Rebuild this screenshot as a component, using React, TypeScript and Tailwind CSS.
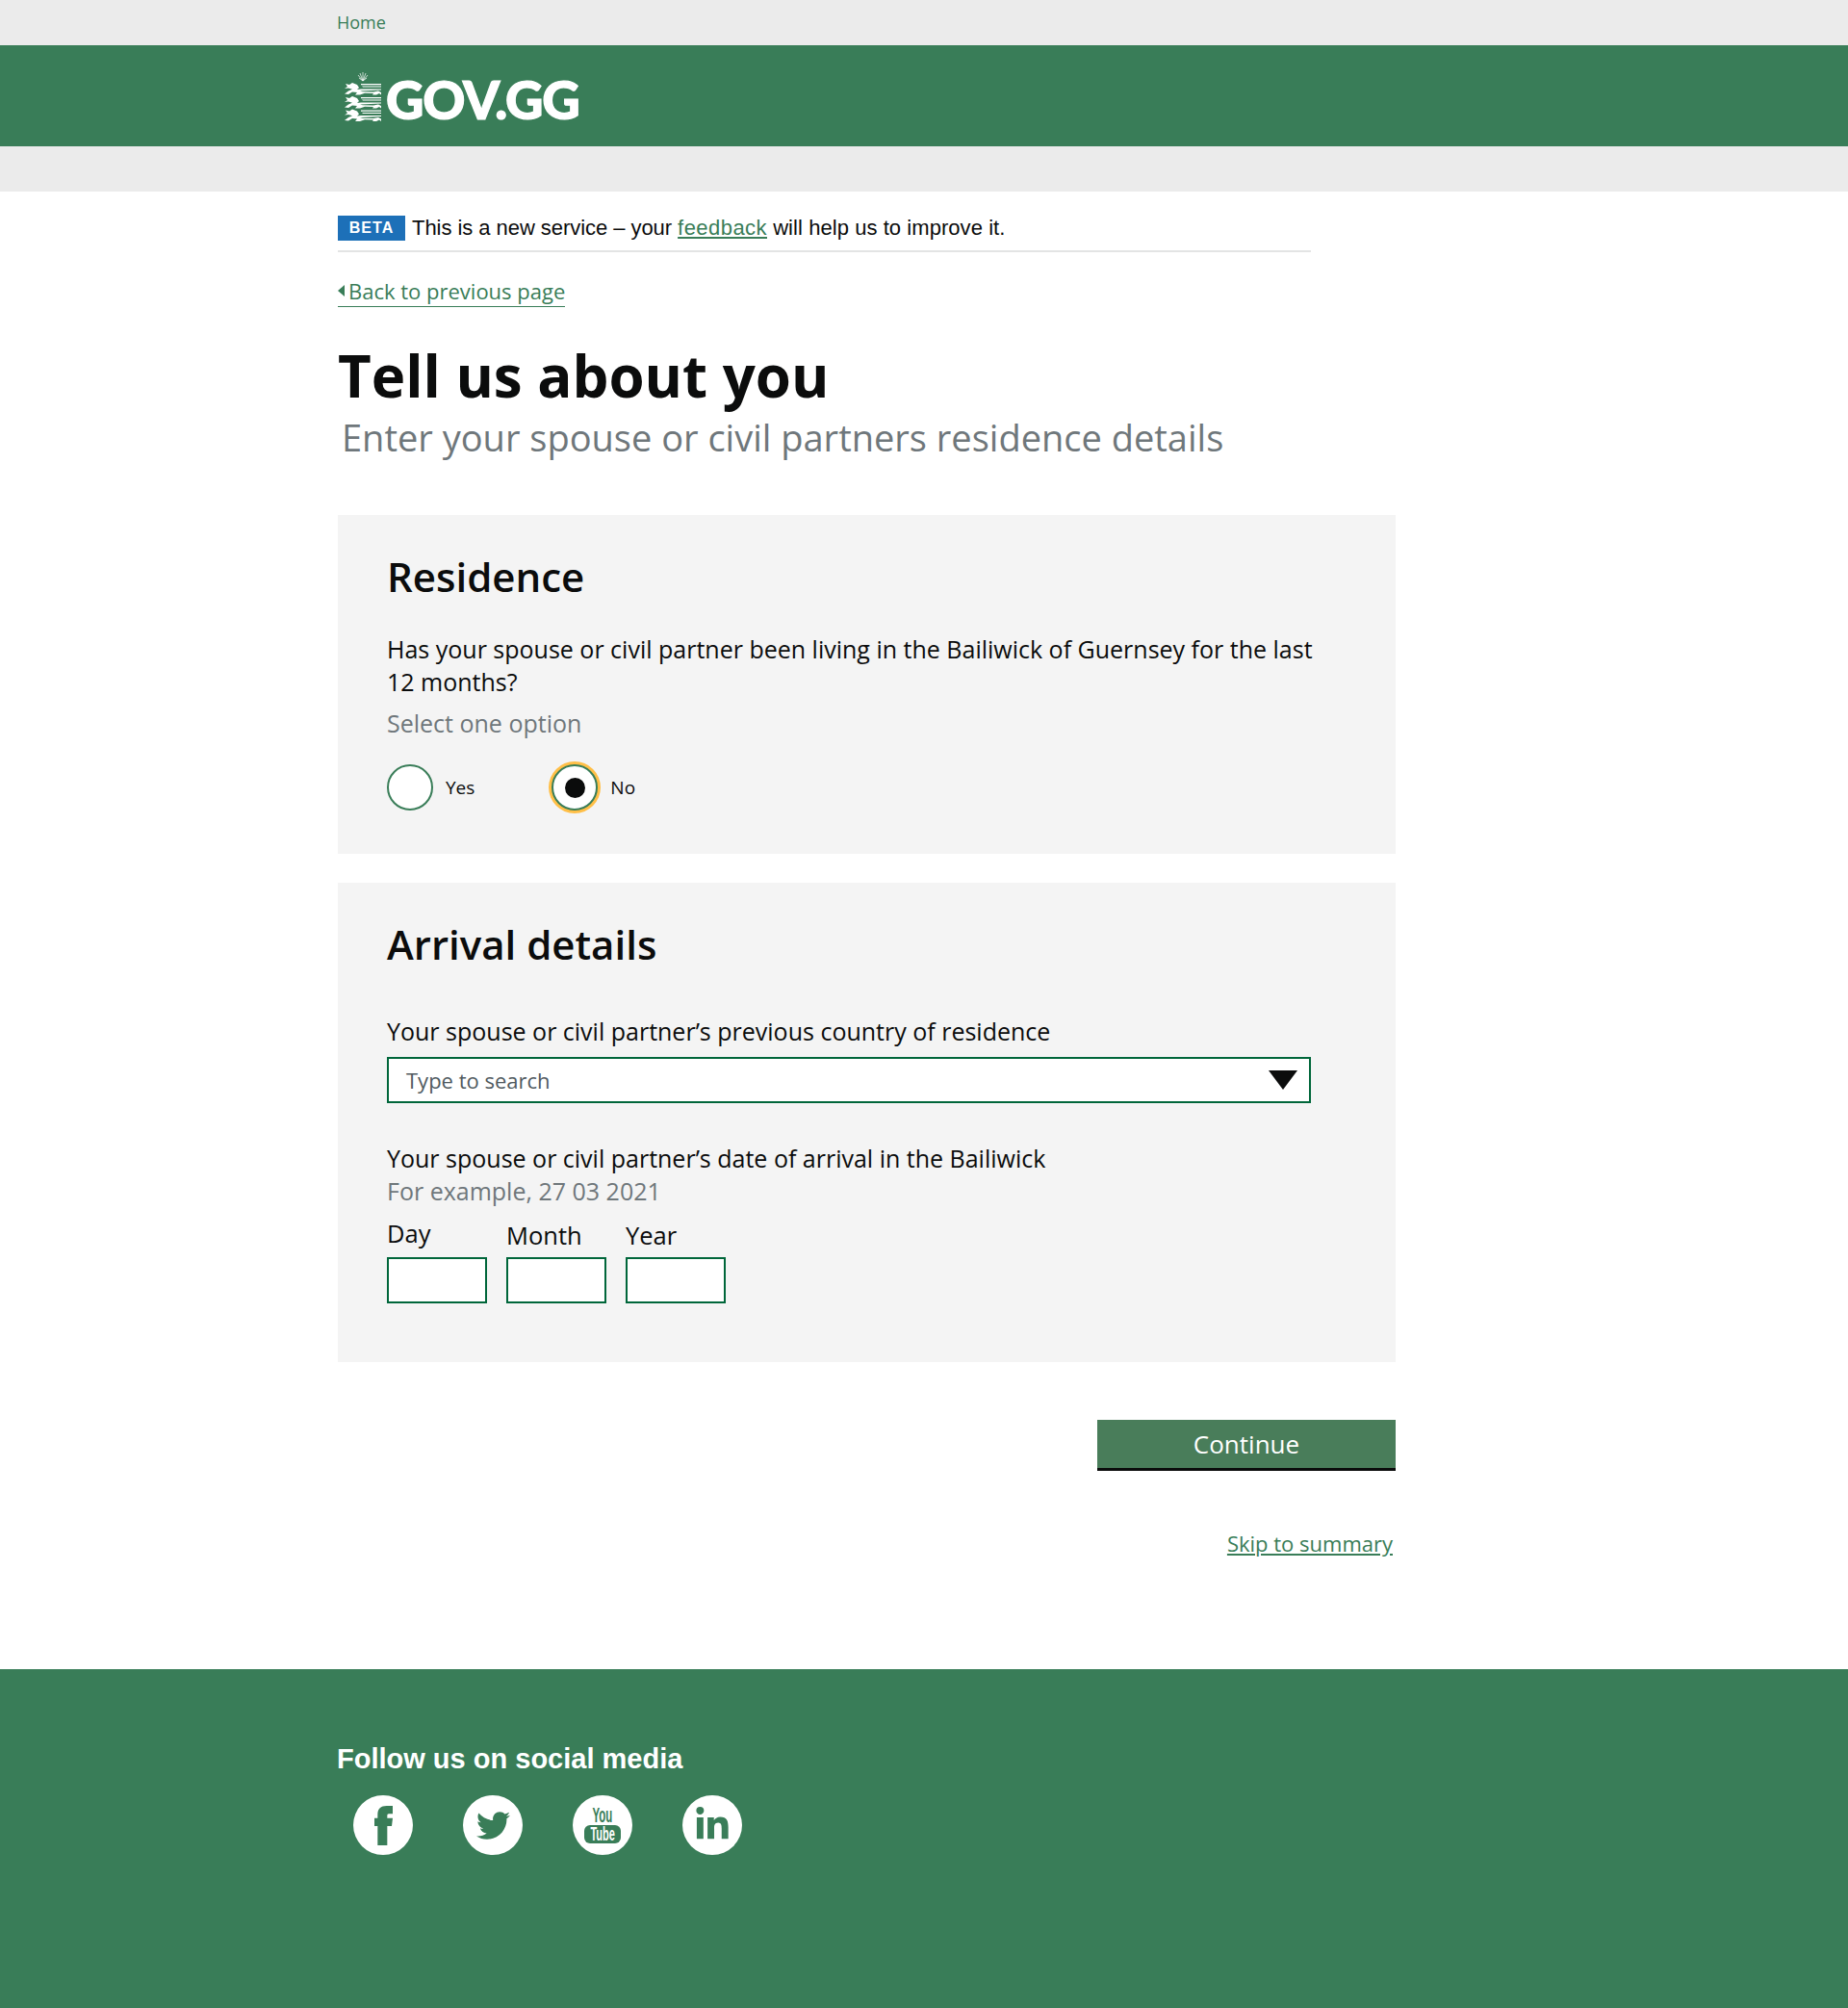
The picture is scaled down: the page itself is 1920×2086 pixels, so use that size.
import React from "react";
import { FaTwitter, FaLinkedinIn } from "react-icons/fa";

const open = "font-['Open_Sans',sans-serif]";
const lib = "font-['Liberation_Sans',Arial,sans-serif]";

function Lion({ y }: { y: number }) {
  return (
    <g transform={`translate(0 ${y})`} fill="#fff">
      <path d="M1 1 L5 2 L8 0 L13 2 L15 5 L13 7 L17 6.6 L38 6.6 L38 7.6 L16 8.6 L19 9.2 L30 9.4 L35 8.6 L38 10 L38 12.4 L36 11 L33 12.4 L29 12.4 L30 11 L21 10.8 L16 12.4 L11 12.4 L13 10 L8 9.4 L4 12 L0 11.4 L4 8.6 L8 6.8 L4 5.6 L0 6 L3 4 Z" />
      <path d="M17 1 H38 V2.2 H17 Z M18 3.6 L38 3.6 V4.6 H19 Z" />
    </g>
  );
}

function Crest() {
  return (
    <svg width="38" height="51" viewBox="0 0 38 51" className="mt-[1px] block">
      <g stroke="#fff" strokeWidth="0.7" fill="none">
        <path d="M19 0 V9 M19 9 L14 3 M19 9 L24 3 M19 9 L15 6 M19 9 L23 6 M19 9 L16 1 M19 9 L22 1" />
      </g>
      <Lion y={11} />
      <Lion y={25} />
      <Lion y={38.5} />
    </svg>
  );
}

function Radio({ label, selected }: { label: string; selected?: boolean }) {
  return (
    <div className="flex items-center">
      <span
        className={`flex h-[48px] w-[48px] items-center justify-center rounded-full border-2 border-[#397d58] bg-white ${
          selected ? "shadow-[0_0_0_3px_#ffbf47]" : ""
        }`}
      >
        {selected && <span className="h-[21px] w-[21px] rounded-full bg-[#0b0c0c]" />}
      </span>
      <span className="ml-[13px] text-[19px] leading-[24px] text-[#0b0c0c]">{label}</span>
    </div>
  );
}

function DateField({ label, offset }: { label: string; offset?: boolean }) {
  return (
    <div className="flex w-[104px] flex-col">
      <span className={`text-[25.5px] leading-[32px] text-[#0b0c0c] ${offset ? "mt-[2px]" : ""}`}>{label}</span>
      <span className={`block h-[48px] w-[104px] border-2 border-[#00663a] bg-white ${offset ? "mt-[7px]" : "mt-[9px]"}`} />
    </div>
  );
}

function Social({ children }: { children: React.ReactNode }) {
  return <a className="flex h-[62px] w-[62px] items-center justify-center rounded-full bg-white text-[#397d58]">{children}</a>;
}

export default function App() {
  return (
    <div className={`${open} flex min-h-[2086px] flex-col bg-white text-[#0b0c0c]`}>
      <div className="h-[47px] bg-[#ebebeb]">
        <div className="mx-auto w-[1218px]">
          <a className="ml-[-1px] block pt-[12px] text-[18px] leading-[23px] text-[#397d58]">Home</a>
        </div>
      </div>
      <header className="h-[105px] bg-[#397d58]">
        <div className="mx-auto flex w-[1218px] items-start pl-[7px] pt-[27px]">
          <Crest />
          <span className="ml-[5px] mt-[1px] font-['Lato',sans-serif] text-[54.5px] font-black leading-[56px] tracking-[-1.2px] text-white [-webkit-text-stroke:1.2px_white]">GOV.GG</span>
        </div>
      </header>
      <div className="h-[47px] bg-[#ebebeb]" />

      <main className="mx-auto w-[1218px]">
        <div className={`mt-[25px] flex h-[38px] w-[1011px] items-start border-b-2 border-[#e3e4e4] ${lib}`}>
          <span className="flex h-[26px] w-[70px] items-center justify-center bg-[#1d70b8] text-[16px] font-bold tracking-[1px] text-white">BETA</span>
          <p className="ml-[7px] text-[22px] leading-[26px] tracking-[0.06px]">
            <span className="tracking-[-0.05px]">This is a new service – your </span>
            <a className="tracking-[0.45px] text-[#397d58] underline">feedback</a> will help us to improve it.
          </p>
        </div>

        <a className="mt-[23px] flex h-[34px] w-[236px] items-center whitespace-nowrap border-b border-[#397d58] text-[22px] leading-[32px] text-[#397d58]">
          <span className="mr-[4px] h-0 w-0 border-y-[6px] border-r-[7px] border-y-transparent border-r-[#397d58]" />
          Back to previous page
        </a>

        <h1 className="mt-[33px] text-[60px] font-bold leading-[76px]">Tell us about you</h1>
        <p className="ml-[4px] text-[38px] leading-[52px] text-[#6f777b]">Enter your spouse or civil partners residence details</p>

        <section className="mt-[55px] h-[352px] w-[1099px] bg-[#f4f4f4] pl-[51px] pr-[80px] pt-[37px]">
          <h2 className="text-[42px] font-semibold leading-[54px]">Residence</h2>
          <p className="mt-[31px] w-[968px] text-[25px] leading-[34px]">
            Has your spouse or civil partner been living in the Bailiwick of Guernsey for the last 12 months?
          </p>
          <p className="mt-[9px] text-[25px] leading-[34px] text-[#6f777b]">Select one option</p>
          <div className="mt-[26px] flex gap-[80px]">
            <Radio label="Yes" />
            <Radio label="No" selected />
          </div>
        </section>

        <section className="mt-[30px] h-[498px] w-[1099px] bg-[#f4f4f4] pl-[51px] pt-[37px]">
          <h2 className="text-[42px] font-semibold leading-[54px]">Arrival details</h2>
          <p className="mt-[46px] text-[25px] leading-[34px]">Your spouse or civil partner’s previous country of residence</p>
          <div className="mt-[10px] flex h-[48px] w-[960px] items-center justify-between border-2 border-[#00663a] bg-white pl-[18px] pr-[12px]">
            <span className="text-[22px] text-[#505a5f]">Type to search</span>
            <span className="h-0 w-0 border-x-[15px] border-t-[20px] border-x-transparent border-t-[#0b0c0c]" />
          </div>
          <p className="mt-[40px] text-[25px] leading-[34px]">Your spouse or civil partner’s date of arrival in the Bailiwick</p>
          <p className="text-[25px] leading-[34px] text-[#6f777b]">For example, 27 03 2021</p>
          <div className="mt-[11px] flex gap-[20px]">
            <DateField label="Day" />
            <DateField label="Month" offset />
            <DateField label="Year" offset />
          </div>
        </section>

        <div className="w-[1099px]">
          <div className="mt-[60px] flex justify-end">
            <button className="h-[53px] w-[310px] border-b-[3px] border-[#0b0c0c] bg-[#497d5a] text-[26px] text-white">Continue</button>
          </div>
          <div className="mt-[59px] flex justify-end pr-[3px]">
            <a className="text-[22px] leading-[32px] text-[#397d58] underline">Skip to summary</a>
          </div>
        </div>
      </main>

      <footer className="mt-auto h-[352px] bg-[#397d58]">
        <div className="mx-auto w-[1218px] pt-[75px]">
          <h2 className={`${lib} ml-[-1px] text-[29px] font-bold leading-[36px] text-white`}>Follow us on social media</h2>
          <div className="ml-[16px] mt-[20px] flex items-center gap-[52px]">
            <Social>
              <svg width="19" height="41" viewBox="0 0 57 123" fill="currentColor">
                <path d="M10 123 V63 H0 V38 H10 V28 C10 8 20 0 38 0 H57 V25 H45 C41 25 40 27 40 31 V38 H57 L54 63 H40 V123 Z" />
              </svg>
            </Social>
            <Social><FaTwitter size={35} /></Social>
            <Social>
              <div className="flex flex-col items-center">
                <span className={`${lib} whitespace-nowrap text-[22px] font-bold leading-[16px] [transform:scaleX(0.52)]`}>You</span>
                <span className="mt-[2px] flex h-[19px] w-[38px] items-center justify-center rounded-[6px] bg-[#397d58]">
                  <span className={`${lib} whitespace-nowrap text-[20px] font-bold leading-[19px] text-white [transform:scaleX(0.55)]`}>Tube</span>
                </span>
              </div>
            </Social>
            <Social><FaLinkedinIn size={38} /></Social>
          </div>
        </div>
      </footer>
    </div>
  );
}
